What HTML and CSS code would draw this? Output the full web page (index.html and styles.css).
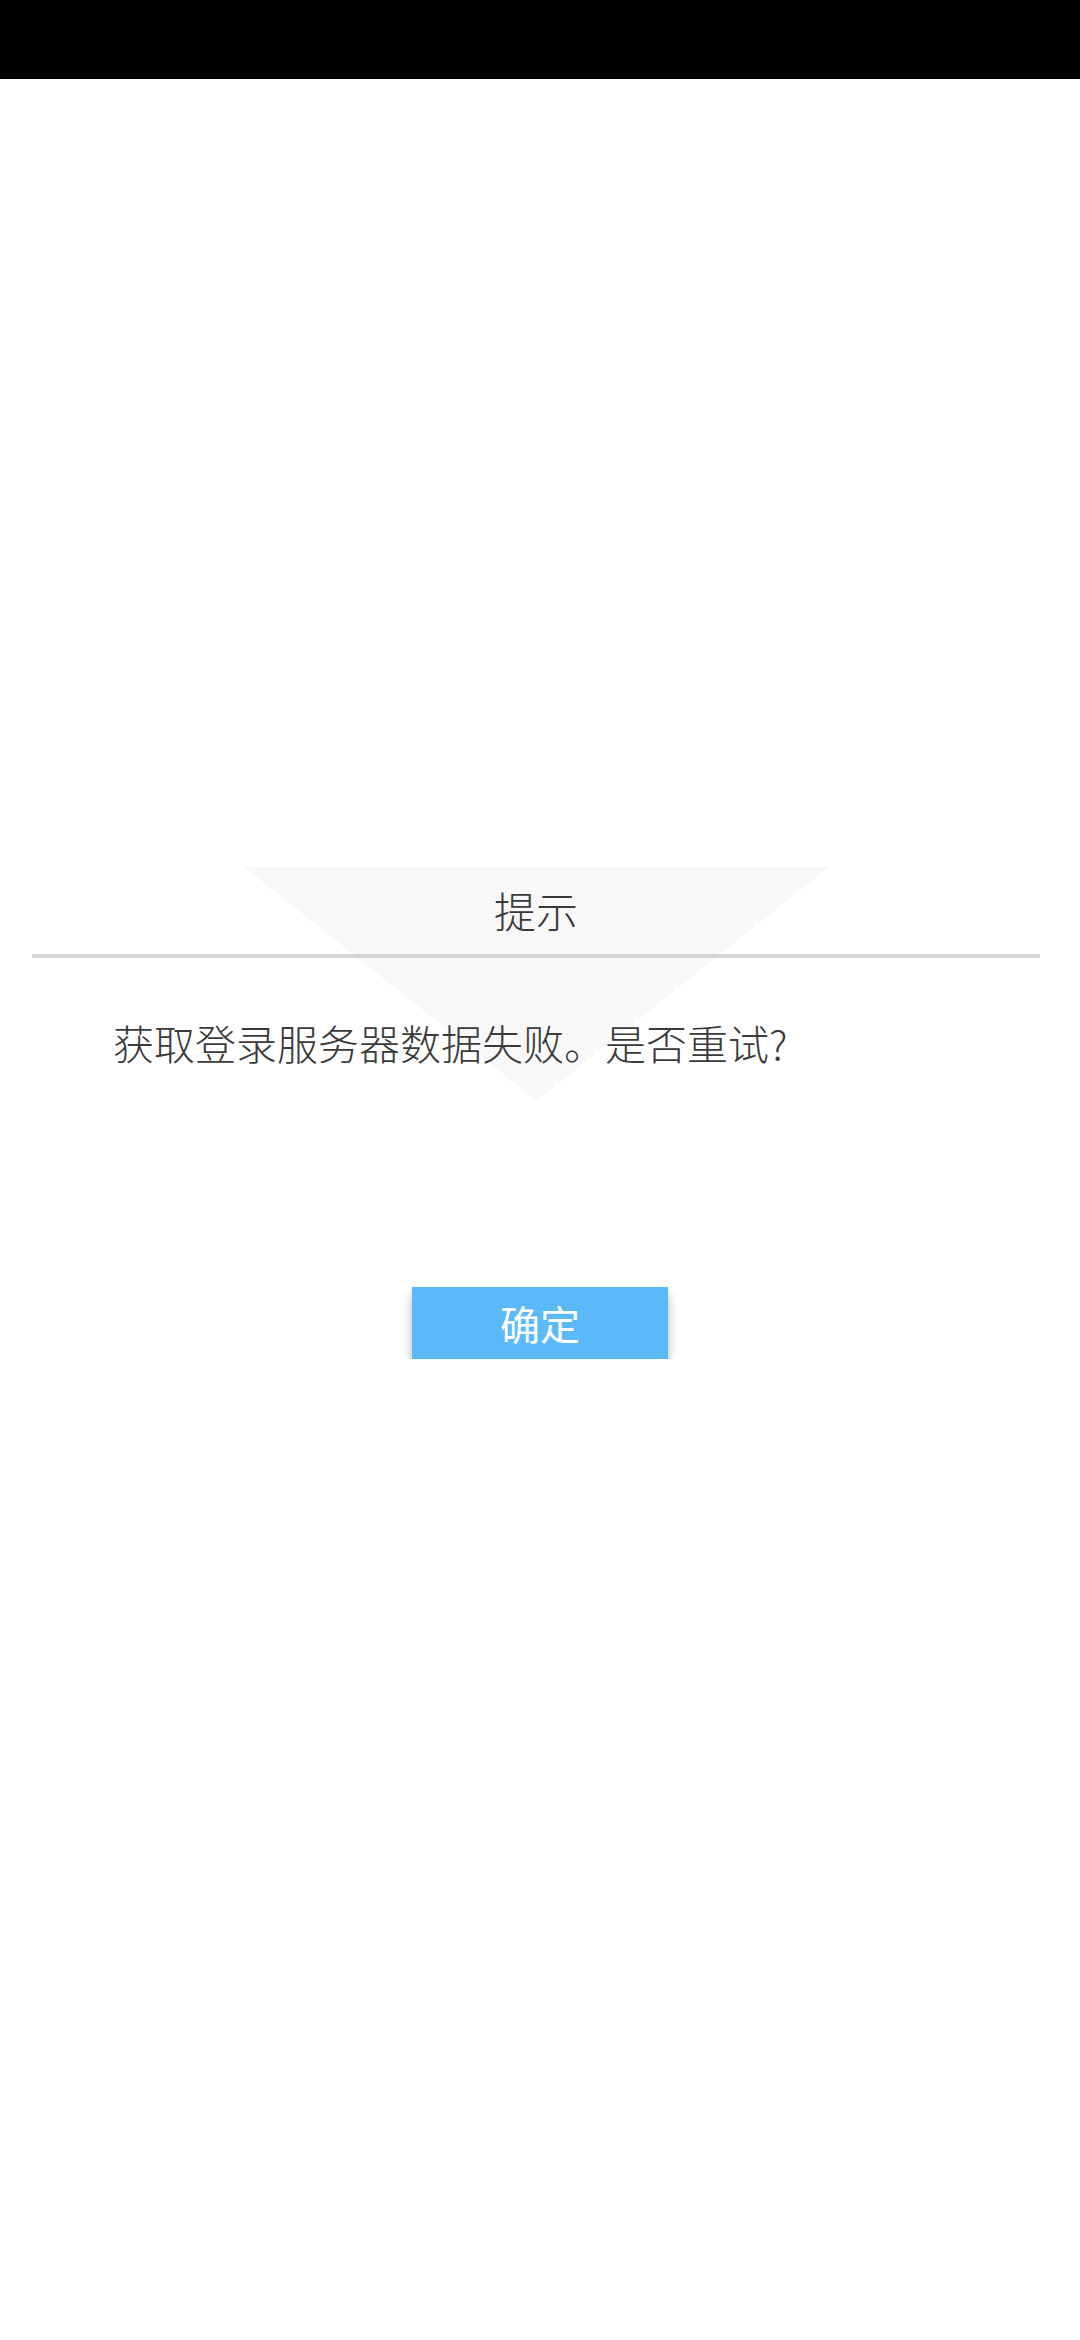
FILE: index.html
```html
<!DOCTYPE html>
<html>
<head>
    <title>提示</title>
    <meta name="viewport" content="width=device-width, initial-scale=1.0">
    <link rel="stylesheet" href="styles.css">
</head>
<body>
    <div class="status-bar"></div>

    <div class="screen">
        <div class="dialog">
            <div class="dialog-title">提示</div>
            <div class="dialog-divider"></div>
            <div class="dialog-message">获取登录服务器数据失败。是否重试?</div>
        </div>

        <button class="btn-ok">确定</button>
    </div>
</body>
</html>
```

FILE: styles.css
```css
body {
    margin: 0;
    background-color: #fff;
    font-family: "Noto Sans CJK SC", "Noto Sans", sans-serif;
    color: #3a3a3a;
}

.status-bar {
    height: 79px;
    background-color: #000;
}

.screen {
    padding-top: 788px;
}

.dialog {
    position: relative;
    margin: 0 40px 0 32px;
}

/* triangolo decorativo dietro al titolo */
.dialog::before {
    content: "";
    position: absolute;
    top: 0;
    left: 50%;
    width: 585px;
    height: 234px;
    margin-left: -292px;
    background-color: #f8f8f8;
    clip-path: polygon(0 0, 100% 0, 50% 100%);
}

.dialog-title,
.dialog-divider,
.dialog-message {
    position: relative;
}

.dialog-title {
    height: 85px;
    padding-bottom: 2px;
    display: flex;
    align-items: center;
    justify-content: center;
    font-size: 42px;
    font-weight: 300;
}

.dialog-divider {
    height: 4px;
    background-color: rgba(200, 200, 200, 0.75);
}

.dialog-message {
    margin-top: 56px;
    padding-left: 81px;
    font-size: 41px;
    line-height: 56px;
    font-weight: 300;
}

.btn-ok {
    display: block;
    width: 256px;
    height: 72px;
    margin: 217px auto 0;
    padding: 0;
    border: none;
    background-color: #5bb9f8;
    color: #fff;
    font-family: "Noto Sans CJK SC", "Noto Sans", sans-serif;
    font-size: 40px;
    font-weight: 400;
    box-shadow: 0 6px 10px rgba(0, 0, 0, 0.28);
}
```
